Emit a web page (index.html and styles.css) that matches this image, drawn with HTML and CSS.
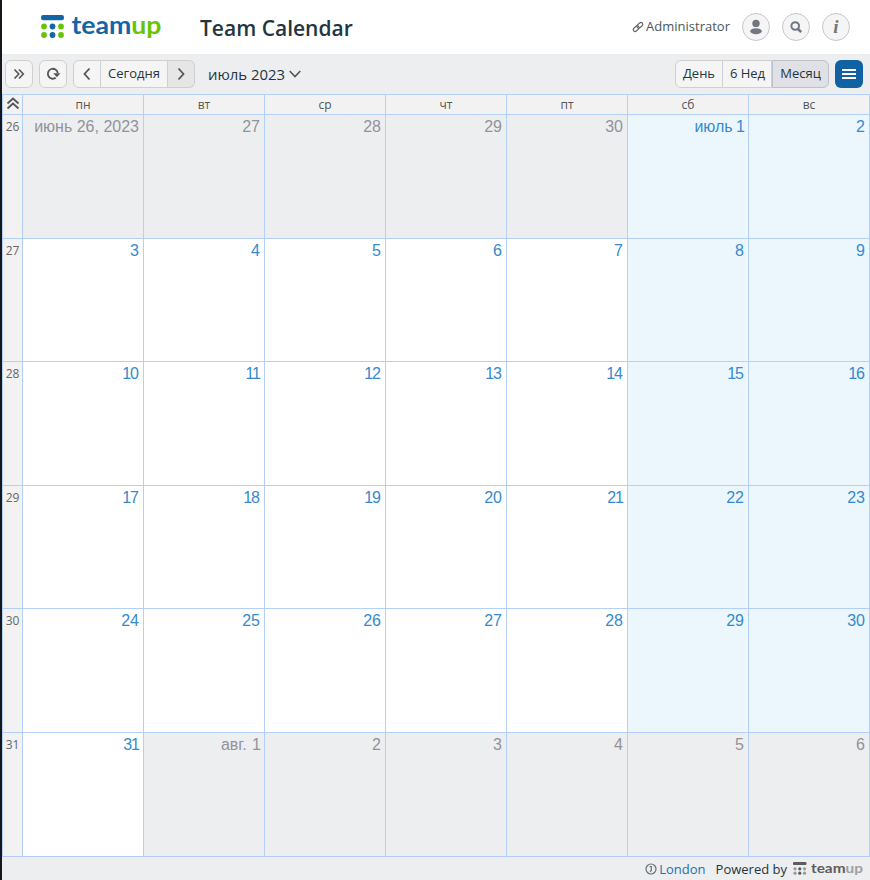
FILE: index.html
```html
<!DOCTYPE html>
<html lang="ru">
<head>
<meta charset="utf-8">
<title>Team Calendar</title>
<link rel="stylesheet" href="styles.css">
</head>
<body>
<header class="header">
  <svg class="logo" width="126" height="40" viewBox="0 -4 126 40">
    <rect x="1" y="4" width="23" height="5.2" rx="2.2" fill="#1266a5"/>
    <g fill="#68c404"><circle cx="4" cy="15.500" r="2.900"/><circle cx="21" cy="15.500" r="2.900"/><circle cx="4" cy="24" r="2.900"/><circle cx="21" cy="24" r="2.900"/></g>
    <g fill="#1266a5"><circle cx="12.500" cy="15.500" r="2.900"/><circle cx="12.500" cy="24" r="2.900"/></g>
    <text class="brand" x="31.500" y="23" font-size="24.500" textLength="90" lengthAdjust="spacingAndGlyphs"><tspan fill="#1266a5">team</tspan><tspan fill="#68c404">up</tspan></text>
  </svg>
  <h1 class="title">Team Calendar</h1>
  <div class="account">
    <svg width="12" height="12" viewBox="0 0 12 12" fill="none" stroke="#5f656c" stroke-width="1.2"><g transform="rotate(-42 6 6)"><rect x=".2" y="4.1" width="6.6" height="3.8" rx="1.9"/><rect x="5.2" y="4.1" width="6.6" height="3.8" rx="1.9"/></g></svg>
    <span>Administrator</span>
  </div>
  <div class="round"><svg width="26" height="26" viewBox="0 0 26 26" fill="#707780"><circle cx="13" cy="9.4" r="3.7"/><ellipse cx="13" cy="17.2" rx="5.7" ry="3"/></svg></div>
  <div class="round"><svg width="26" height="26" viewBox="0 0 26 26" fill="none" stroke="#707780"><circle cx="12.2" cy="12" r="3.8" stroke-width="2"/><path d="M15 15l3.2 3.2" stroke-width="2.5"/></svg></div>
  <div class="round info">i</div>
</header>
<nav class="toolbar">
  <button class="btn square"><svg width="26" height="26" viewBox="0 0 26 26"><path d="M8.5 8.5l4.3 4.5-4.3 4.5M13 8.5l4.3 4.5-4.3 4.5"/></svg></button>
  <button class="btn square refresh"><svg width="26" height="26" viewBox="0 0 26 26"><path class="thick" d="M15.8 16.8a5 5 0 1 1 2-4.8"/><path class="solid" d="M13.3 12.2h7.2l-3.6 4.1z"/></svg></button>
  <div class="group">
    <button class="prev"><svg width="26" height="26" viewBox="0 0 26 26"><path class="thick" d="M15.5 7.500l-5 5.500 5 5.500"/></svg></button>
    <button class="today">Сегодня</button>
    <button class="next"><svg width="26" height="26" viewBox="0 0 26 26"><path class="thick" d="M10.5 7.500l5 5.500-5 5.500"/></svg></button>
  </div>
  <div class="period">июль 2023<svg width="12" height="8" viewBox="0 0 12 8"><path d="M.7 1L6 6.500 11.300 1"/></svg></div>
  <div class="group views">
    <button class="day">День</button>
    <button class="weeks">6 Нед</button>
    <button class="month">Месяц</button>
  </div>
  <button class="menu"><i></i><i></i><i></i></button>
</nav>
<main class="calendar">
  <div class="head"><svg width="14" height="13" viewBox="0 0 14 13"><path class="thick" d="M1.500 6.500L7 1.500l5.500 5M1.500 11.500L7 6.500l5.500 5"/></svg></div>
  <div class="head">пн</div><div class="head">вт</div><div class="head">ср</div><div class="head">чт</div><div class="head">пт</div><div class="head">сб</div><div class="head">вс</div>
  <div class="week">26</div><div class="cell out">июнь 26, 2023</div><div class="cell out">27</div><div class="cell out">28</div><div class="cell out">29</div><div class="cell out">30</div><div class="cell end first">июль 1</div><div class="cell end">2</div>
  <div class="week">27</div><div class="cell">3</div><div class="cell">4</div><div class="cell">5</div><div class="cell">6</div><div class="cell">7</div><div class="cell end">8</div><div class="cell end">9</div>
  <div class="week">28</div><div class="cell teen">10</div><div class="cell one">11</div><div class="cell teen">12</div><div class="cell teen">13</div><div class="cell teen">14</div><div class="cell end teen">15</div><div class="cell end teen">16</div>
  <div class="week">29</div><div class="cell teen">17</div><div class="cell teen">18</div><div class="cell teen">19</div><div class="cell">20</div><div class="cell one">21</div><div class="cell end">22</div><div class="cell end">23</div>
  <div class="week">30</div><div class="cell">24</div><div class="cell">25</div><div class="cell">26</div><div class="cell">27</div><div class="cell">28</div><div class="cell end">29</div><div class="cell end">30</div>
  <div class="week">31</div><div class="cell one">31</div><div class="cell out last">авг. 1</div><div class="cell out">2</div><div class="cell out">3</div><div class="cell out">4</div><div class="cell out">5</div><div class="cell out">6</div>
</main>
<footer class="footer">
  <svg class="clock" width="12" height="12" viewBox="0 0 12 12" fill="none" stroke="#686e76" stroke-width="1.2"><circle cx="6" cy="6" r="5"/><path d="M4.500 3.500H6.300V7.500L5 8.700"/></svg>
  <a class="zone">London</a>
  <span class="powered">Powered by</span>
  <svg width="70" height="20" viewBox="0 -1 70 20">
    <rect y="2" width="13.500" height="3" rx="1" fill="#5d5d5d"/>
    <g fill="#999"><circle cx="2" cy="8.800" r="1.600"/><circle cx="11.500" cy="8.800" r="1.600"/><circle cx="2" cy="13.200" r="1.600"/><circle cx="11.500" cy="13.200" r="1.600"/></g>
    <g fill="#5d5d5d"><circle cx="6.750" cy="8.800" r="1.600"/><circle cx="6.750" cy="13.200" r="1.600"/></g>
    <text class="brand" x="18" y="12.500" font-size="14" textLength="52" lengthAdjust="spacingAndGlyphs"><tspan fill="#5d5d5d">team</tspan><tspan fill="#a0a0a0">up</tspan></text>
  </svg>
</footer>
</body>
</html>
```
FILE: styles.css
```css
* { box-sizing: border-box; }
body {
  margin: 0;
  width: 870px;
  height: 880px;
  overflow: hidden;
  border-left: 2px solid #15171c;
  background: #edeef0;
  color: #243540;
  font-family: "Open Sans", "Noto Sans", sans-serif;
  font-size: 13px;
}
svg { display: block; flex: none; overflow: visible; }
.header {
  height: 54px;
  padding: 0 20px 0 38px;
  display: flex;
  align-items: center;
  background: #fff;
}
.brand { font-family: Lato, "Open Sans", sans-serif; font-weight: 700; }
.title { margin: 1px 0 0 34px; font-size: 21px; font-weight: 600; line-height: 30px; }
.account { margin-left: auto; display: flex; align-items: center; gap: 2px; color: #4c555d; }
.account span { margin-top: -2px; }
.round {
  width: 28px;
  height: 28px;
  margin-left: 12px;
  border: 1px solid #c6c7cd;
  border-radius: 50%;
  background: #f5f5f5;
}
.info { font: italic bold 19px/25px "Liberation Serif", serif; text-align: center; color: #707780; }
.toolbar { height: 40px; padding: 0 7px 0 3px; display: flex; align-items: center; }
button {
  padding: 0 0 2px;
  height: 28px;
  border: 1px solid #cfcfcf;
  background: #f5f5f5;
  color: inherit;
  font: inherit;
  line-height: 24px;
}
.btn { width: 28px; border-radius: 6px; }
.refresh { margin: 0 6px; }
.toolbar svg, .head svg { fill: none; stroke: #555; stroke-width: 1.6; }
.toolbar .thick, .head .thick { stroke-width: 1.8; }
.toolbar .solid { fill: #555; stroke: none; }
.square, .prev, .next { padding: 0; }
.group { display: flex; }
.group button + button { border-left: 0; }
.group button:first-child { border-radius: 6px 0 0 6px; }
.group button:last-child { border-radius: 0 6px 6px 0; }
.prev { width: 28px; }
.today { width: 67px; }
.next { width: 27px; background: #e6e6e6; }
.period { display: flex; align-items: center; gap: 4px; margin-left: 13px; font-size: 14.9px; }
.views { margin-left: auto; }
.day { width: 48px; }
.weeks { width: 49px; padding-left: 1px; }
.group .month { width: 57px; border: 1px solid #bfc0c7; background: #e0e1e7; }
.menu {
  width: 28px;
  margin-left: 6px;
  padding: 0;
  display: flex;
  flex-direction: column;
  align-items: center;
  justify-content: center;
  gap: 2px;
  border: 0;
  border-radius: 6px;
  background: #1062a3;
}
.menu i { width: 14px; height: 2px; background: #fff; }
.calendar {
  display: grid;
  grid-template-columns: 20px repeat(7, 121px);
  grid-template-rows: 20px 124px 123px 124px 123px 124px 124px;
  width: 868px;
  border-right: 1px solid #b5cef8;
  border-bottom: 1px solid #b5c9fb;
}
.calendar > div { border-top: 1px solid #b5cffb; border-left: 1px solid #b5cffb; }
.head {
  display: flex;
  justify-content: center;
  background: #f2f2f2;
  color: #555;
  font-size: 12px;
  line-height: 19px;
}
.head svg { margin-top: 2px; }
.week { background: #f2f2f2; color: #666; font-size: 12px; line-height: 23px; text-align: center; }
.cell {
  padding: 2px 4px 0 0;
  background: #fff;
  color: #368acb;
  font-family: "Liberation Sans", Arial, sans-serif;
  font-size: 16px;
  line-height: 20px;
  text-align: right;
}
/* Tighter setting around the digit 1 */
.teen { letter-spacing: -1px; padding-right: 5px; }
.one { letter-spacing: -1px; padding-right: 4px; }
.first { padding-right: 3px; word-spacing: -1px; }
.last { padding-right: 3px; word-spacing: 1px; }
.out { background: #edeef0; color: #929399; }
.end { background: #ebf7fd; }
.footer { height: 23px; padding: 1px 7px 0 0; display: flex; align-items: center; justify-content: flex-end; }
.zone { margin-left: 2px; color: #2470ab; }
.powered { margin: 0 6px 0 10px; }
```
